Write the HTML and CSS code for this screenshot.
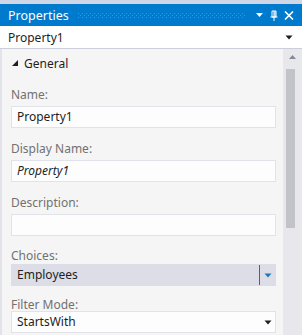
FILE: index.html
```html
<!DOCTYPE html>
<html lang="en">
<head>
<title>Properties</title>
<link rel="stylesheet" href="styles.css">
</head>
<body>
  <div class="window">
    <div class="titlebar">
      <span class="title">Properties</span>
      <span class="grip"></span>
      <svg class="tool" width="9" height="6" viewBox="0 0 9 6"><path d="M1 1h7l-3.5 4z" fill="#fff"/></svg>
      <svg class="tool" width="8" height="11" viewBox="0 0 8 11"><path d="M2 1h4v6H2zM4 1v6M0.5 7h7M4 7v4" stroke="#fff" fill="none"/><path d="M4.5 1.5h1v5h-1z" fill="#fff"/></svg>
      <svg class="tool" width="10" height="9" viewBox="0 0 10 9"><path d="M1 0.5l8 8M9 0.5l-8 8" stroke="#fff" stroke-width="1.6"/></svg>
    </div>
    <div class="selector">
      <span>Property1</span>
      <svg class="arrow" width="8" height="5" viewBox="0 0 8 5"><path d="M0.5 0.5h7L4 4.5z" fill="#1e1e1e"/></svg>
    </div>
    <div class="panel">
      <div class="content">
        <div class="category">
          <svg width="6" height="6" viewBox="0 0 6 6"><path d="M6 0v6H0z" fill="#1e1e1e"/></svg>
          <span>General</span>
        </div>
        <div class="field">
          <label>Name:</label>
          <div class="input">Property1</div>
        </div>
        <div class="field">
          <label>Display Name:</label>
          <div class="input italic">Property1</div>
        </div>
        <div class="field">
          <label>Description:</label>
          <div class="input"></div>
        </div>
        <div class="field tight">
          <label>Choices:</label>
          <div class="input combo active">
            <span>Employees</span>
            <span class="button"><svg width="8" height="5" viewBox="0 0 8 5"><path d="M0.5 0.5h7L4 4.5z" fill="#1c79c0"/></svg></span>
          </div>
        </div>
        <div class="field tighter">
          <label>Filter Mode:</label>
          <div class="input combo">
            <span>StartsWith</span>
            <span class="button"><svg width="8" height="5" viewBox="0 0 8 5"><path d="M0.5 0.5h7L4 4.5z" fill="#1e1e1e"/></svg></span>
          </div>
        </div>
      </div>
      <div class="scrollbar">
        <svg class="up" width="7" height="4" viewBox="0 0 7 4"><path d="M0 4h7L3.5 0z" fill="#868999"/></svg>
        <div class="thumb"></div>
      </div>
    </div>
  </div>
</body>
</html>
```

FILE: styles.css
```css
body {
  margin: 0;
  width: 302px;
  height: 335px;
  overflow: hidden;
  background-color: #cfd6e5;
  font-family: "Noto Sans", "Open Sans", sans-serif;
  font-size: 12px;
  color: #1e1e1e;
}
.window {
  margin-top: 4px;
}
.titlebar {
  height: 22px;
  background-color: #007acc;
  display: flex;
  align-items: center;
  padding: 0 8px 0 8px;
  color: #fff;
}
.title {
  font-size: 12.5px;
}
/* dotted drag area between the title and the buttons */
.grip {
  flex: 1;
  height: 5px;
  margin: 1px 9px 0 9px;
  background-image:
    radial-gradient(circle at 0.5px 0.5px, #3d98d8 0.6px, transparent 0.7px),
    radial-gradient(circle at 2.5px 2.5px, #3d98d8 0.6px, transparent 0.7px);
  background-size: 4px 4px;
}
.tool {
  margin-left: 6px;
}
.tool:first-of-type {
  margin-left: 0;
}
.selector {
  height: 22px;
  background-color: #fff;
  border-bottom: 1px solid #cccedb;
  display: flex;
  align-items: center;
  justify-content: space-between;
  padding: 0 9px 0 8px;
}
.panel {
  display: flex;
  height: 290px;
  background-color: #f5f5f5;
  border-left: 2px solid #e3e4ea;
}
.content {
  flex: 1;
  padding: 0 7px 0 9px;
}
.category {
  display: flex;
  align-items: center;
  gap: 6px;
  height: 28px;
  padding-left: 1px;
}
.field {
  display: flex;
  flex-direction: column;
  margin-top: 13px;
}
.category + .field {
  margin-top: 10px;
}
.field label {
  color: #717171;
  height: 16px;
  line-height: 16px;
  margin-bottom: 3px;
}
.tight {
  margin-top: 12px;
}
.tight label {
  margin-bottom: 0;
}
.tighter {
  margin-top: 11px;
}
.tighter label {
  margin-bottom: -2px;
}
.input {
  height: 20px;
  line-height: 20px;
  background-color: #fdfdfd;
  border: 1px solid #e2e3ea;
  padding-left: 5px;
}
.italic {
  font-style: italic;
}
.combo {
  display: flex;
  justify-content: space-between;
  padding-right: 0;
}
.combo .button {
  width: 15px;
  display: flex;
  align-items: center;
  justify-content: center;
}
.active {
  background-color: #dcdde7;
  border-color: #dcdde7;
}
.active .button {
  border-left: 1px solid #007acc;
}
.scrollbar {
  width: 19px;
  background-color: #e8e8ec;
  display: flex;
  flex-direction: column;
  align-items: flex-start;
}
.up {
  margin: 6px 0 0 6px;
}
.thumb {
  width: 9px;
  height: 159px;
  margin: 10px 0 0 3px;
  background-color: #c2c3c9;
}
```
